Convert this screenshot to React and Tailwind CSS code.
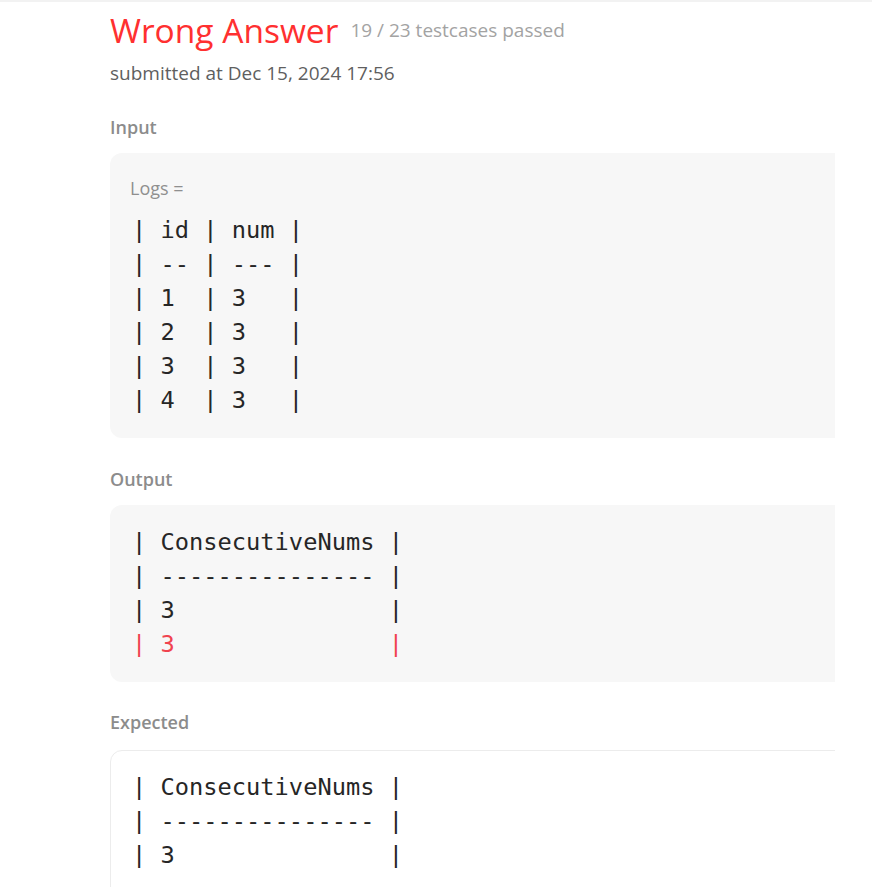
const sans = "font-['Open_Sans','Noto_Sans',sans-serif]";
const mono = "font-['DejaVu_Sans_Mono','Liberation_Mono',monospace]";

const Line = ({ children, red }) => (
  <div className={`whitespace-pre h-[34px] leading-[34px] ${red ? "text-[#f0434f]" : "text-[#262626]"}`}>
    {children}
  </div>
);

export default function App() {
  return (
    <div className={`min-h-screen bg-white border-t-2 border-[#f2f2f2] ${sans}`}>
      <div className="ml-[110px] w-[725px] overflow-hidden pt-[5px]">
        {/* Header */}
        <div className="flex items-center gap-[12px]">
          <h1 className="text-[33.5px] leading-[46px] font-medium text-[#ff3030]">Wrong Answer</h1>
          <span className="text-[19px] text-[#a3a3a3]">19 / 23 testcases passed</span>
        </div>
        <div className="mt-[7px] text-[19px] leading-[26px] text-[#5f5f5f]">submitted at Dec 15, 2024 17:56</div>

        {/* Input */}
        <div className="mt-[28px] text-[18px] leading-[26px] font-semibold text-[#8c8c8c]">Input</div>
        <div className="mt-[13px] w-[760px] rounded-xl bg-[#f7f7f7] pl-[20px] pt-[22px] pb-[21px]">
          <div className="text-[18px] leading-[26px] text-[#8f8f8f]">Logs =</div>
          <div className={`mt-[12px] pl-[2px] text-[23.7px] ${mono}`}>
            <Line>{"| id | num |"}</Line>
            <Line>{"| -- | --- |"}</Line>
            <Line>{"| 1  | 3   |"}</Line>
            <Line>{"| 2  | 3   |"}</Line>
            <Line>{"| 3  | 3   |"}</Line>
            <Line>{"| 4  | 3   |"}</Line>
          </div>
        </div>

        {/* Output */}
        <div className="mt-[28px] text-[18px] leading-[26px] font-semibold text-[#8c8c8c]">Output</div>
        <div className={`mt-[13px] w-[760px] rounded-xl bg-[#f7f7f7] pl-[22px] pt-[20px] pb-[21px] text-[23.7px] ${mono}`}>
          <Line>{"| ConsecutiveNums |"}</Line>
          <Line>{"| --------------- |"}</Line>
          <Line>{"| 3               |"}</Line>
          <Line red>{"| 3               |"}</Line>
        </div>

        {/* Expected */}
        <div className="mt-[27px] text-[18px] leading-[26px] font-semibold text-[#8c8c8c]">Expected</div>
        <div className={`mt-[15px] w-[760px] rounded-xl border border-[#ececec] bg-white pl-[21px] pt-[19px] pb-[40px] text-[23.7px] ${mono}`}>
          <Line>{"| ConsecutiveNums |"}</Line>
          <Line>{"| --------------- |"}</Line>
          <Line>{"| 3               |"}</Line>
        </div>
      </div>
    </div>
  );
}
